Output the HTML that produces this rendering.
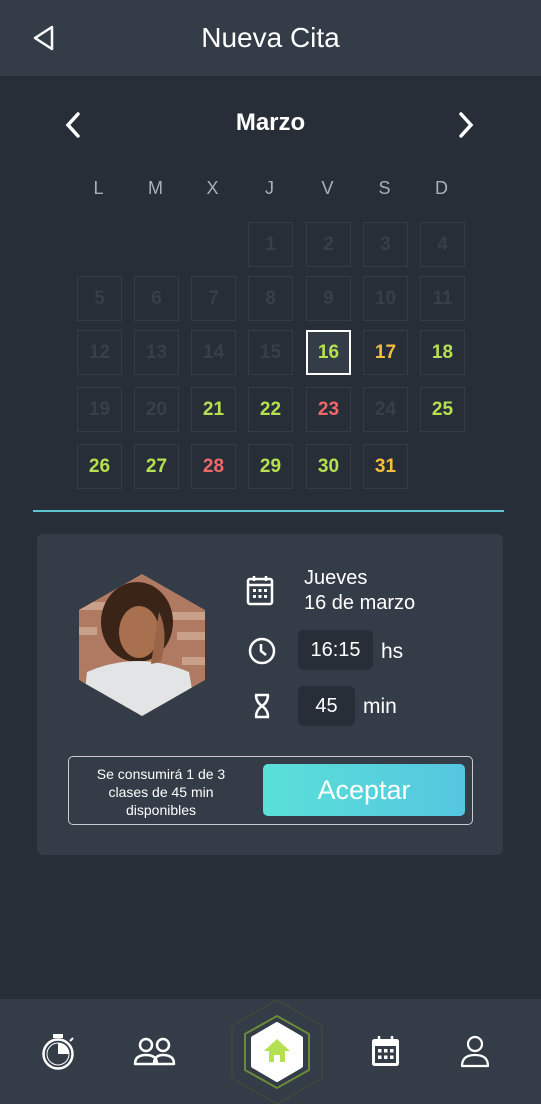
<!DOCTYPE html><html><head><meta charset="utf-8"><style>
*{margin:0;padding:0;box-sizing:border-box}
body{width:541px;height:1104px;background:#272e38;font-family:"Liberation Sans",sans-serif;color:#fff;position:relative;overflow:hidden}
.a{position:absolute}
.hdr{left:0;top:0;width:541px;height:76px;background:#333c47}
.c{position:absolute;width:45px;height:45px;border:1.5px solid #333c47;font-size:19px;display:flex;align-items:center;justify-content:center;color:#363f4a;font-weight:bold}
.g{color:#b5e051}.y{color:#f5bf3a}.r{color:#f06868}
.dl{position:absolute;top:178px;font-size:18px;color:#aab0b8;width:45px;text-align:center}
</style></head><body>
<div class="a hdr"></div>
<svg class="a" style="left:32px;top:24px" width="24" height="28" viewBox="0 0 24 28"><path d="M20 3 L3 14 L20 25 Z" fill="none" stroke="#fff" stroke-width="2.5" stroke-linejoin="round"/></svg>
<div class="a" style="left:0;width:541px;top:22px;text-align:center;font-size:28px">Nueva Cita</div>
<svg class="a" style="left:60px;top:110px" width="24" height="30"><path d="M18 4 L8 15 L18 26" fill="none" stroke="#fff" stroke-width="3.5" stroke-linecap="round"/></svg>
<svg class="a" style="left:455px;top:110px" width="24" height="30"><path d="M6 4 L16 15 L6 26" fill="none" stroke="#fff" stroke-width="3.5" stroke-linecap="round"/></svg>
<div class="a" style="left:0;width:541px;top:109px;text-align:center;font-size:24px;font-weight:bold">Marzo</div>
<div class="dl" style="left:76px">L</div><div class="dl" style="left:133px">M</div><div class="dl" style="left:190px">X</div><div class="dl" style="left:247px">J</div><div class="dl" style="left:305px">V</div><div class="dl" style="left:362px">S</div><div class="dl" style="left:419px">D</div>
<div class="c" style="left:248px;top:222px">1</div><div class="c" style="left:306px;top:222px">2</div><div class="c" style="left:363px;top:222px">3</div><div class="c" style="left:420px;top:222px">4</div>
<div class="c" style="left:77px;top:276px">5</div><div class="c" style="left:134px;top:276px">6</div><div class="c" style="left:191px;top:276px">7</div><div class="c" style="left:248px;top:276px">8</div><div class="c" style="left:306px;top:276px">9</div><div class="c" style="left:363px;top:276px">10</div><div class="c" style="left:420px;top:276px">11</div>
<div class="c" style="left:77px;top:330px">12</div><div class="c" style="left:134px;top:330px">13</div><div class="c" style="left:191px;top:330px">14</div><div class="c" style="left:248px;top:330px">15</div><div class="c g" style="left:306px;top:330px;border:2px solid #fff;background:#333c47">16</div><div class="c y" style="left:363px;top:330px">17</div><div class="c g" style="left:420px;top:330px">18</div>
<div class="c" style="left:77px;top:387px">19</div><div class="c" style="left:134px;top:387px">20</div><div class="c g" style="left:191px;top:387px">21</div><div class="c g" style="left:248px;top:387px">22</div><div class="c r" style="left:306px;top:387px">23</div><div class="c" style="left:363px;top:387px">24</div><div class="c g" style="left:420px;top:387px">25</div>
<div class="c g" style="left:77px;top:444px">26</div><div class="c g" style="left:134px;top:444px">27</div><div class="c r" style="left:191px;top:444px">28</div><div class="c g" style="left:248px;top:444px">29</div><div class="c g" style="left:306px;top:444px">30</div><div class="c y" style="left:363px;top:444px">31</div>
<div class="a" style="left:33px;top:510px;width:471px;height:2px;background:#5cc4d0"></div>
<div class="a" style="left:37px;top:534px;width:466px;height:321px;background:#333c47;border-radius:6px"></div>
<svg class="a" style="left:77px;top:572px" width="131" height="146" viewBox="0 0 131 146"><defs><clipPath id="h"><path d="M65 2 L128 38 L128 108 L65 144 L2 108 L2 38 Z"/></clipPath></defs><g clip-path="url(#h)"><rect width="131" height="146" fill="#b07a62"/><g fill="#c9a08a"><rect x="0" y="30" width="30" height="8"/><rect x="95" y="40" width="36" height="8"/><rect x="100" y="60" width="30" height="8"/><rect x="0" y="55" width="20" height="8"/><rect x="105" y="85" width="26" height="8"/></g><ellipse cx="60" cy="50" rx="36" ry="40" fill="#3a2418"/><ellipse cx="62" cy="60" rx="20" ry="26" fill="#a8704f"/><path d="M5 146 L10 100 Q60 78 112 100 L120 146 Z" fill="#e2e4e6"/><path d="M82 40 Q92 60 84 90 L74 92 Z" fill="#9a6448"/></g></svg>
<svg class="a" style="left:246px;top:574px" width="28" height="32" viewBox="0 0 28 32"><rect x="2" y="5" width="24" height="25" rx="2" fill="none" stroke="#fff" stroke-width="2.5"/><line x1="2" y1="11" x2="26" y2="11" stroke="#fff" stroke-width="2.5"/><line x1="8" y1="2" x2="8" y2="7" stroke="#fff" stroke-width="2.5"/><line x1="20" y1="2" x2="20" y2="7" stroke="#fff" stroke-width="2.5"/><g fill="#fff"><rect x="7" y="15" width="3" height="3"/><rect x="12.5" y="15" width="3" height="3"/><rect x="18" y="15" width="3" height="3"/><rect x="7" y="21" width="3" height="3"/><rect x="12.5" y="21" width="3" height="3"/><rect x="18" y="21" width="3" height="3"/></g></svg>
<div class="a" style="left:304px;top:566px;font-size:20px;line-height:25px">Jueves<br>16 de marzo</div>
<svg class="a" style="left:247px;top:636px" width="30" height="30"><circle cx="15" cy="15" r="12" fill="none" stroke="#fff" stroke-width="2.5"/><path d="M14 8 V15 L19 19" fill="none" stroke="#fff" stroke-width="2.5"/></svg>
<div class="a" style="left:298px;top:630px;width:75px;height:40px;background:#272e38;border-radius:6px;font-size:20px;text-align:center;line-height:40px">16:15</div>
<div class="a" style="left:381px;top:640px;font-size:21px">hs</div>
<svg class="a" style="left:252px;top:692px" width="20" height="28"><path d="M3 3 H17 M3 25 H17 M4 3 Q4 10 10 14 Q16 10 16 3 M4 25 Q4 18 10 14 Q16 18 16 25" fill="none" stroke="#fff" stroke-width="2.5"/></svg>
<div class="a" style="left:298px;top:686px;width:57px;height:40px;background:#272e38;border-radius:6px;font-size:20px;text-align:center;line-height:40px">45</div>
<div class="a" style="left:363px;top:695px;font-size:21px">min</div>
<div class="a" style="left:68px;top:756px;width:405px;height:69px;border:1.5px solid #c8ccd0;border-radius:5px"></div>
<div class="a" style="left:76px;top:765px;width:170px;text-align:center;font-size:14px;line-height:18px">Se consumirá 1 de 3 clases de 45 min disponibles</div>
<div class="a" style="left:263px;top:764px;width:202px;height:52px;border-radius:5px;background:linear-gradient(90deg,#5ae0d8,#55c6e0);font-size:27px;text-align:center;line-height:52px">Aceptar</div>
<div class="a" style="left:0;top:999px;width:541px;height:105px;background:#333c47"></div>
<svg class="a" style="left:40px;top:1032px" width="38" height="40"><rect x="13" y="2" width="10" height="4" fill="#fff"/><circle cx="18" cy="22" r="14.5" fill="none" stroke="#fff" stroke-width="2.5"/><circle cx="18" cy="22" r="11" fill="none" stroke="#fff" stroke-width="1"/><path d="M18 22 V11 A11 11 0 0 1 29 22 Z" fill="#fff"/><line x1="30" y1="9" x2="33" y2="6" stroke="#fff" stroke-width="2"/></svg>
<svg class="a" style="left:132px;top:1036px" width="46" height="32"><circle cx="14" cy="9" r="6" fill="none" stroke="#fff" stroke-width="2.5"/><circle cx="31" cy="9" r="6" fill="none" stroke="#fff" stroke-width="2.5"/><path d="M3 28 Q3 19 14 19 Q25 19 25 28 Z M22 28 Q22 19 31 19 Q42 19 42 28 Z" fill="none" stroke="#fff" stroke-width="2.5" stroke-linejoin="round"/></svg>
<svg class="a" style="left:222px;top:998px" width="110" height="106" viewBox="0 0 110 106"><path d="M55 2 L100 28 L100 80 L55 106 L10 80 L10 28 Z" fill="none" stroke="#3f4a3a" stroke-width="1.5"/><path d="M55 18 L87 36 L87 72 L55 90 L23 72 L23 36 Z" fill="none" stroke="#6a8a3a" stroke-width="2"/><path d="M55 26 L79 40 L79 68 L55 82 L31 68 L31 40 Z" fill="#fff" stroke="#fff" stroke-width="4" stroke-linejoin="round"/><path d="M55 41 L68 53 H63 V64 H58 V57 H52 V64 H47 V53 H42 Z" fill="#b5e051"/></svg>
<svg class="a" style="left:370px;top:1034px" width="32" height="34"><rect x="2" y="5" width="27" height="27" rx="2.5" fill="#fff"/><rect x="5" y="12" width="21" height="17" fill="#333c47"/><line x1="9" y1="2" x2="9" y2="7" stroke="#fff" stroke-width="2.5"/><line x1="22" y1="2" x2="22" y2="7" stroke="#fff" stroke-width="2.5"/><g fill="#fff"><rect x="8" y="15" width="3.5" height="3.5"/><rect x="14" y="15" width="3.5" height="3.5"/><rect x="20" y="15" width="3.5" height="3.5"/><rect x="8" y="21.5" width="3.5" height="3.5"/><rect x="14" y="21.5" width="3.5" height="3.5"/><rect x="20" y="21.5" width="3.5" height="3.5"/></g></svg>
<svg class="a" style="left:459px;top:1034px" width="32" height="36"><circle cx="16" cy="10" r="7" fill="none" stroke="#fff" stroke-width="2.2"/><path d="M3 32 Q3 21 16 21 Q29 21 29 32 Z" fill="none" stroke="#fff" stroke-width="2.2" stroke-linejoin="round"/></svg>
</body></html>
